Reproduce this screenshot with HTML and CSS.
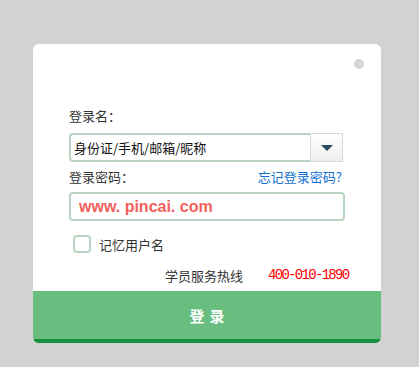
FILE: index.html
```html
<!DOCTYPE html>
<html lang="zh-CN">
<head>
<meta charset="utf-8">
<title>登录</title>
<link rel="stylesheet" href="styles.css">
</head>
<body>
<div class="card">
  <span class="close-dot"></span>
  <div class="form">
    <div class="label">登录名：</div>
    <div class="select">
      <div class="select-text">身份证/手机/邮箱/昵称</div>
      <div class="select-btn"><span class="arrow"></span></div>
    </div>
    <div class="label-row">
      <span class="label">登录密码：</span>
      <a class="forgot">忘记登录密码?</a>
    </div>
    <div class="pwd">www. pincai. com</div>
    <div class="remember">
      <span class="checkbox"></span>
      <span class="remember-text">记忆用户名</span>
    </div>
    <div class="hotline">
      <span class="hotline-label">学员服务热线</span>
      <span class="hotline-num">400-010-1890</span>
    </div>
  </div>
  <div class="login-btn">登录</div>
</div>
</body>
</html>
```
FILE: styles.css
```css
html, body {
  margin: 0;
  padding: 0;
}
body {
  background: #d2d2d2;
  width: 419px;
  height: 367px;
  font-family: "Noto Sans CJK SC", "Liberation Sans", sans-serif;
  color: #333;
  overflow: hidden;
}
.card {
  position: relative;
  margin: 44px 0 0 33px;
  width: 348px;
  height: 299px;
  background: #fff;
  border-radius: 6px;
  overflow: hidden;
  display: flex;
  flex-direction: column;
}
.close-dot {
  position: absolute;
  left: 321px;
  top: 15px;
  width: 10px;
  height: 10px;
  border-radius: 50%;
  background: #d6d6d6;
}
.form {
  padding: 62px 36px 0 36px;
  display: flex;
  flex-direction: column;
  flex: 1;
}
.label {
  font-size: 13px;
  line-height: 20px;
  height: 20px;
  color: #333;
}
.select {
  margin-top: 7px;
  height: 29px;
  display: flex;
  margin-right: 2px;
}
.select-text {
  flex: 1;
  border: 2px solid #b8d4c0;
  border-right: none;
  border-radius: 4px 0 0 4px;
  padding-left: 3px;
  font-size: 13px;
  line-height: 25px;
  color: #111;
}
.select-btn {
  width: 31px;
  border: 1px solid #d8d8d8;
  background: linear-gradient(#ffffff, #eeeeee);
  display: flex;
  align-items: center;
  justify-content: center;
}
.arrow {
  width: 0;
  height: 0;
  border-left: 6px solid transparent;
  border-right: 6px solid transparent;
  border-top: 6px solid #2a4a62;
  margin-top: 1px;
}
.label-row {
  margin-top: 5px;
  display: flex;
  justify-content: space-between;
  align-items: center;
  height: 20px;
}
.forgot {
  font-size: 13px;
  line-height: 20px;
  color: #1170cf;
  margin-right: 3px;
}
.pwd {
  margin-top: 5px;
  height: 25px;
  border: 2px solid #b8d4c0;
  border-radius: 4px;
  padding-left: 8px;
  font-family: "Liberation Sans", Arial, sans-serif;
  font-weight: bold;
  font-size: 16px;
  line-height: 25px;
  color: #f2605b;
}
.remember {
  margin-top: 14px;
  display: flex;
  align-items: center;
  height: 18px;
  padding-left: 4px;
}
.checkbox {
  width: 14px;
  height: 14px;
  border: 2px solid #b8d4c0;
  border-radius: 4px;
}
.remember-text {
  margin-left: 8px;
  font-size: 13px;
  color: #333;
}
.hotline {
  margin-top: 12px;
  margin-right: -10px;
  height: 20px;
  display: flex;
  align-items: center;
  padding-left: 96px;
  white-space: nowrap;
}
.hotline-label {
  font-size: 13px;
  color: #333;
  flex-shrink: 0;
}
.hotline-num {
  flex-shrink: 0;
  margin-left: 25px;
  font-family: "Liberation Mono", "DejaVu Sans Mono", monospace;
  font-size: 14px;
  letter-spacing: -1.7px;
  color: #ff0000;
}
.login-btn {
  height: 48px;
  background: #68bd7f;
  border-bottom: 4px solid #17903f;
  color: #fff;
  font-weight: bold;
  font-size: 15px;
  letter-spacing: 5px;
  padding-left: 5px;
  display: flex;
  align-items: center;
  justify-content: center;
}
```
